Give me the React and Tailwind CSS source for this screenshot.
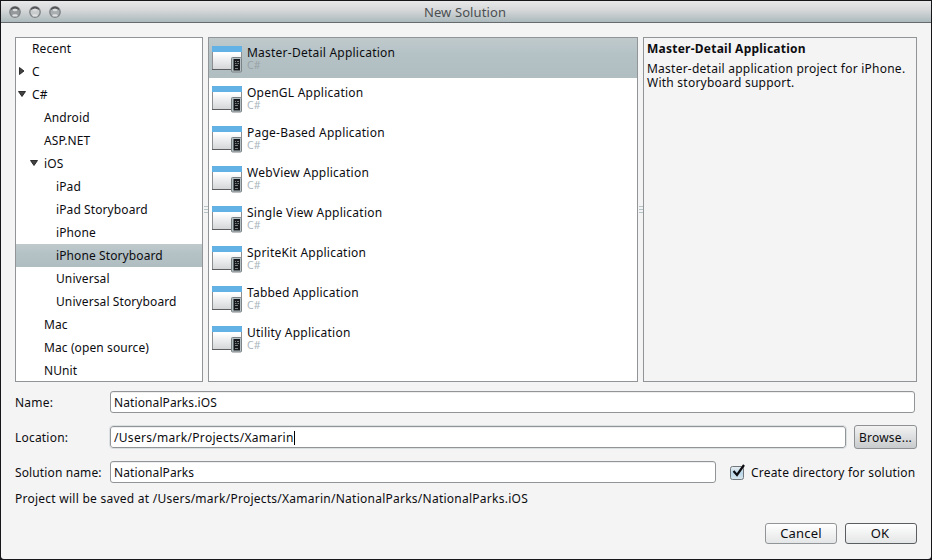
import React from "react";

const tree = [
  { label: "Recent", pad: "pl-[16px]" },
  { label: "C", pad: "pl-[16px]", arrow: "right" },
  { label: "C#", pad: "pl-[16px]", arrow: "down" },
  { label: "Android", pad: "pl-[28px]" },
  { label: "ASP.NET", pad: "pl-[28px]" },
  { label: "iOS", pad: "pl-[28px]", arrow: "down" },
  { label: "iPad", pad: "pl-[40px]" },
  { label: "iPad Storyboard", pad: "pl-[40px]" },
  { label: "iPhone", pad: "pl-[40px]" },
  { label: "iPhone Storyboard", pad: "pl-[40px]", selected: true },
  { label: "Universal", pad: "pl-[40px]" },
  { label: "Universal Storyboard", pad: "pl-[40px]" },
  { label: "Mac", pad: "pl-[28px]" },
  { label: "Mac (open source)", pad: "pl-[28px]" },
  { label: "NUnit", pad: "pl-[28px]" },
];

const templates = [
  "Master-Detail Application",
  "OpenGL Application",
  "Page-Based Application",
  "WebView Application",
  "Single View Application",
  "SpriteKit Application",
  "Tabbed Application",
  "Utility Application",
];

const selectedBg = "bg-linear-to-b from-[#c0cacc] via-[#b4c2c6] via-40% to-[#b0bdc1]";

function TrafficLight({ fill }) {
  return (
    <svg width="12" height="12" viewBox="0 0 12 12">
      <circle cx="6" cy="6" r="5.2" fill={fill} stroke="#808487" strokeWidth="1.4" />
      <path d="M2 3.2 A5 5 0 0 1 10 3.2 Q6 0.8 2 3.2 Z" fill="#505254" stroke="#505254" />
      <ellipse cx="6" cy="4" rx="2.4" ry="1.2" fill="#d9dbdc" />
      <ellipse cx="6" cy="9.4" rx="2.8" ry="1.2" fill="#dfe1e2" />
    </svg>
  );
}

function Arrow({ dir }) {
  return (
    <svg className="absolute right-full top-[7px] mr-[6px]" width="8" height="8" viewBox="0 0 8 8">
      {dir === "right" ? (
        <path d="M1.5 0.5 L6 4 L1.5 7.5 Z" fill="#444" stroke="#111" strokeWidth="0.8" />
      ) : (
        <path d="M0.5 1.5 L7.5 1.5 L4 6.5 Z" fill="#444" stroke="#111" strokeWidth="0.8" />
      )}
    </svg>
  );
}

function TemplateIcon() {
  return (
    <svg className="mt-[7px] shrink-0" width="31" height="28" viewBox="0 0 31 28">
      <defs>
        <linearGradient id="pane" x1="0" y1="0" x2="0" y2="1">
          <stop offset="0.3" stopColor="#fff" />
          <stop offset="1" stopColor="#d3d5d7" />
        </linearGradient>
      </defs>
      <rect x="0.5" y="1.5" width="29" height="23" fill="url(#pane)" stroke="#8c8e90" />
      <path d="M0 24.5 H30" stroke="#5b5d60" />
      <path d="M0 7 V2 Q0 1 1 1 H29 Q30 1 30 2 V7 Z" fill="#62b2e5" />
      <rect x="19.5" y="12.5" width="10" height="14.5" rx="1" fill="#b4c0c4" stroke="#7b8286" />
      <rect x="21.5" y="14" width="6.5" height="11.5" fill="#17181b" />
      <path
        d="M23 16.5 h1 m1 0 h2 M23 18.5 h1.5 m1 0 h1.5 M23 20.5 h3 M23 23.5 h3"
        stroke="#858d91"
        strokeWidth="0.9"
      />
    </svg>
  );
}

function Grip() {
  return (
    <div className="flex h-[345px] flex-col items-center justify-center gap-[2px]">
      <span className="h-px w-1 bg-[#b5c2c6]" />
      <span className="h-px w-1 bg-[#b5c2c6]" />
      <span className="h-px w-1 bg-[#b5c2c6]" />
    </div>
  );
}

function Field({ value, width, focused }) {
  return (
    <div
      className={`flex h-[22px] items-center rounded-[3px] border border-[#929597] bg-white pt-px pl-[3px] shadow-[inset_0_1px_0_#eeeeee] ${width} ${
        focused ? "tracking-[0.3px] outline outline-[#dadfe2]" : "tracking-[0.1px]"
      }`}
    >
      <span>{value}</span>
      {focused && <span className="h-[14px] w-px bg-black" />}
    </div>
  );
}

export default function App() {
  return (
    <div className="h-[560px] w-[932px] overflow-hidden bg-[#16161a] p-px font-['Noto_Sans','Open_Sans',sans-serif] text-[12px] leading-[14px] tracking-[0.2px] whitespace-nowrap text-[#0c0c10]">
      <div className="flex h-[558px] flex-col overflow-hidden rounded-b-[3px] bg-[#f4f4f4]">
        <header className="grid h-[22px] shrink-0 grid-cols-[1fr_auto_1fr] items-center border-b border-[#686b6e] bg-linear-to-b from-[#e8e8e9] via-[#d5d7d8] via-45% to-[#acbabd] pl-2">
          <div className="flex gap-2">
            <TrafficLight fill="#96999b" />
            <TrafficLight fill="#c9cccd" />
            <TrafficLight fill="#a9aeb0" />
          </div>
          <h1 className="mr-[10px] text-[13px] tracking-[0.1px] text-[#4c4f52]">New Solution</h1>
        </header>

        <main className="flex flex-col pt-[14px] pl-[14px]">
          <div className="flex h-[345px]">
            <nav className="h-[345px] w-[188px] overflow-hidden border border-[#929597] bg-white tracking-[0.1px]">
              <ul className="-mt-px">
                {tree.map((n) => (
                  <li
                    key={n.label}
                    className={`flex h-[23px] items-center ${n.pad} ${n.selected ? selectedBg : ""}`}
                  >
                    <span className="relative flex h-[23px] items-center">
                      {n.arrow && <Arrow dir={n.arrow} />}
                      {n.label}
                    </span>
                  </li>
                ))}
              </ul>
            </nav>
            <div className="w-[5px]">
              <Grip />
            </div>
            <ul className="h-[345px] w-[430px] border border-[#929597] bg-white">
              {templates.map((t, i) => (
                <li key={t} className={`flex h-10 gap-1 pl-[3px] ${i === 0 ? selectedBg : ""}`}>
                  <TemplateIcon />
                  <div className="pt-2 tracking-[0.23px]">
                    <div>{t}</div>
                    <div
                      className={`text-[10.5px] leading-[10px] ${i === 0 ? "text-[#98a2a5]" : "text-[#a9b6bb]"}`}
                    >
                      C#
                    </div>
                  </div>
                </li>
              ))}
            </ul>
            <div className="w-[5px]">
              <Grip />
            </div>
            <section className="h-[345px] w-[274px] border border-[#929597] pt-1 pl-[3px] tracking-[0.24px]">
              <h2 className="font-bold">Master-Detail Application</h2>
              <p className="mt-[6px]">
                Master-detail application project for iPhone.
                <br />
                With storyboard support.
              </p>
            </section>
          </div>

          <div className="mt-[9px] flex h-[22px] items-center">
            <label className="w-[95px] pt-px">Name:</label>
            <Field value="NationalParks.iOS" width="w-[805px]" />
          </div>
          <div className="mt-[13px] flex h-[22px] items-center">
            <label className="w-[95px] pt-px">Location:</label>
            <Field value="/Users/mark/Projects/Xamarin" width="w-[736px]" focused />
            <button className="ml-2 h-6 w-[63px] rounded-[3px] border border-[#8d9194] bg-linear-to-b from-[#f2f2f2] to-[#c8cbcd] pt-px">
              Browse...
            </button>
          </div>
          <div className="mt-[13px] flex h-[22px] items-center">
            <label className="w-[95px] pt-px tracking-[0.12px]">Solution name:</label>
            <Field value="NationalParks" width="w-[606px]" />
            <svg className="ml-[14px]" width="16" height="18" viewBox="0 0 16 18">
              <defs>
                <linearGradient id="chk" x1="0" y1="0" x2="0" y2="1">
                  <stop offset="0" stopColor="#eceeef" />
                  <stop offset="0.5" stopColor="#b9d7ea" />
                  <stop offset="1" stopColor="#d9e6ec" />
                </linearGradient>
              </defs>
              <rect x="0.5" y="3.5" width="13" height="13" rx="2" fill="url(#chk)" stroke="#6f777c" />
              <path d="M3.5 8 L7 12 L14 2" fill="none" stroke="#0c0c10" strokeWidth="2.2" />
            </svg>
            <span className="ml-[5px] pt-px">Create directory for solution</span>
          </div>
          <p className="mt-[9px] tracking-[0.25px]">
            Project will be saved at /Users/mark/Projects/Xamarin/NationalParks/NationalParks.iOS
          </p>
          <div className="mt-[17px] flex w-[902px] justify-end gap-2">
            <button className="h-[21px] w-[72px] rounded-[3px] border border-[#929597] bg-linear-to-b from-white to-[#e4e5e6] pb-px text-[13px]">
              Cancel
            </button>
            <button className="h-[21px] w-[72px] rounded-[3px] border border-[#5b5e61] bg-linear-to-b from-white to-[#e4e5e6] pr-0.5 pb-px text-[13px]">
              OK
            </button>
          </div>
        </main>
      </div>
    </div>
  );
}
